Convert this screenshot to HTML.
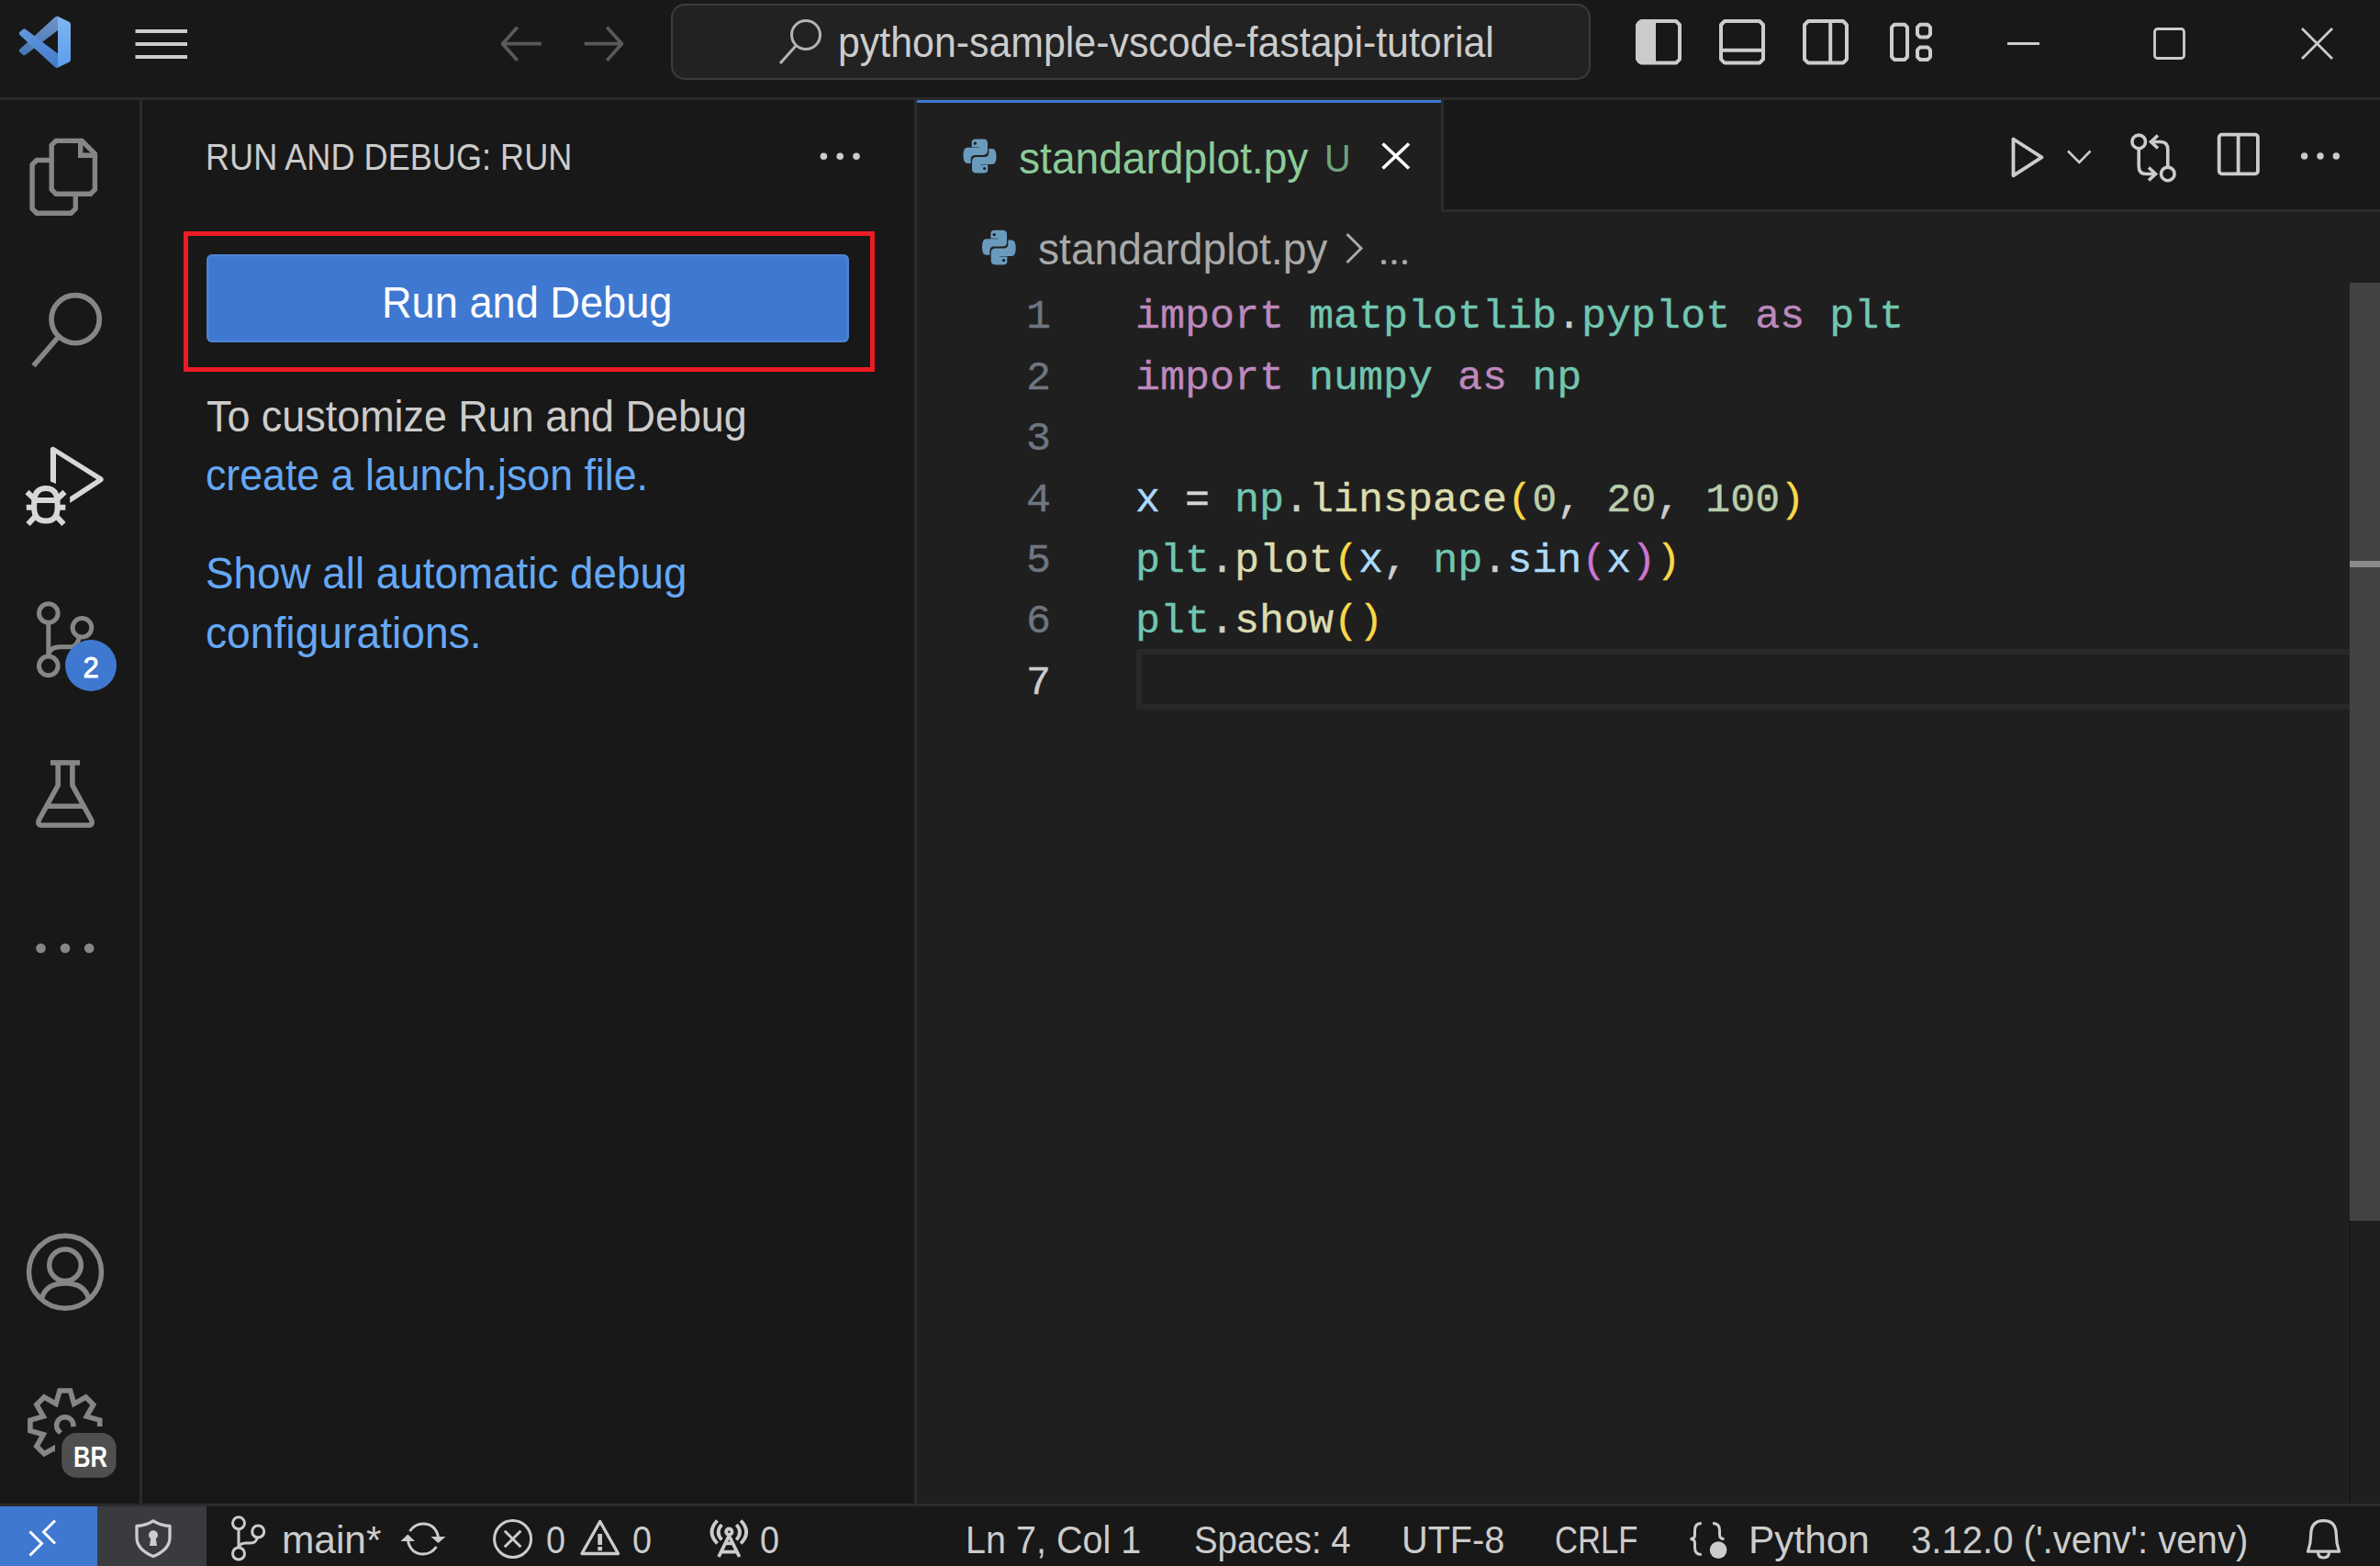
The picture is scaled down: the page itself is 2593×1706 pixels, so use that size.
<!DOCTYPE html>
<html><head><meta charset="utf-8">
<style>
html,body{margin:0;padding:0;}
body{width:2593px;height:1706px;overflow:hidden;background:#181818;position:relative;font-family:"Liberation Sans",sans-serif;}
.r{position:absolute;}
.t{position:absolute;white-space:pre;line-height:1;transform-origin:0 0;font-family:"Liberation Sans",sans-serif;}
.m{position:absolute;white-space:pre;line-height:1;font-family:"Liberation Mono",monospace;-webkit-text-stroke:0.35px currentColor;}
svg.ov{position:absolute;left:0;top:0;}
</style></head><body>
<!-- backgrounds -->
<div class="r" style="left:0;top:0;width:2593px;height:106px;background:#181818"></div>
<div class="r" style="left:0;top:106px;width:2593px;height:3px;background:#2b2b2b"></div>
<div class="r" style="left:152px;top:109px;width:3px;height:1529px;background:#2b2b2b"></div>
<div class="r" style="left:996px;top:109px;width:3px;height:1529px;background:#2b2b2b"></div>
<!-- editor -->
<div class="r" style="left:999px;top:231px;width:1594px;height:1407px;background:#1f1f1f"></div>
<div class="r" style="left:999px;top:228px;width:1594px;height:3px;background:#2b2b2b"></div>
<div class="r" style="left:999px;top:109px;width:571px;height:122px;background:#1f1f1f"></div>
<div class="r" style="left:999px;top:109px;width:571px;height:3px;background:#3f78d0"></div>
<div class="r" style="left:1570px;top:109px;width:3px;height:122px;background:#2b2b2b"></div>
<!-- status bar -->
<div class="r" style="left:0;top:1638px;width:2593px;height:3px;background:#2b2b2b"></div>
<div class="r" style="left:0;top:1641px;width:106px;height:65px;background:#3f78d0"></div>
<div class="r" style="left:106px;top:1641px;width:119px;height:65px;background:#3a3b3f"></div>

<div class="r" style="left:731px;top:4px;width:998px;height:79px;border:2.5px solid #3c3c3c;border-radius:15px;background:#222222"></div>
<!-- TEXT -->
<div class="t" id="title" style="left:913px;top:23px;font-size:46px;color:#cccccc;transform:scaleX(0.932)">python-sample-vscode-fastapi-tutorial</div>

<div class="t" id="sbt" style="left:224px;top:151.4px;font-size:40.6px;color:#cccccc;transform:scaleX(0.89)">RUN AND DEBUG: RUN</div>

<div class="r" style="left:200px;top:252px;width:743px;height:143px;border:5px solid #ec1c24"></div>
<div class="r" style="left:225px;top:277px;width:700px;height:96px;background:#3f78d0;border-radius:6px;box-shadow:inset 0 0 0 2.5px rgba(255,255,255,0.08)"></div>
<div class="t" id="btn" style="left:416px;top:305.8px;font-size:47.8px;color:#ffffff;transform:scaleX(0.945)">Run and Debug</div>

<div class="t" id="p1" style="left:225px;top:430px;font-size:47.8px;color:#cccccc;transform:scaleX(0.939)">To customize Run and Debug</div>
<div class="t" id="p2" style="left:224px;top:493.5px;font-size:47.8px;color:#66a8f5;transform:scaleX(0.935)">create a launch.json file.</div>
<div class="t" id="p3" style="left:224px;top:600.5px;font-size:47.8px;color:#66a8f5;transform:scaleX(0.958)">Show all automatic debug</div>
<div class="t" id="p4" style="left:224px;top:666px;font-size:47.8px;color:#66a8f5;transform:scaleX(0.967)">configurations.</div>

<div class="t" id="tab" style="left:1110px;top:149.2px;font-size:47.8px;color:#8ccb98;transform:scaleX(0.965)">standardplot.py</div>
<div class="t" id="tabu" style="left:1443px;top:150.6px;font-size:43px;color:#6fa37c;transform:scaleX(0.92)">U</div>

<div class="t" id="bc" style="left:1131px;top:247.9px;font-size:47.8px;color:#a9a9a9;transform:scaleX(0.965)">standardplot.py</div>

<!-- status texts -->
<div class="t" id="s_main" style="left:307px;top:1656.5px;font-size:42.5px;color:#cccccc;transform:scaleX(0.998)">main*</div>
<div class="t" id="s_e0" style="left:595px;top:1656.5px;font-size:42.5px;color:#cccccc;transform:scaleX(0.89)">0</div>
<div class="t" id="s_w0" style="left:689px;top:1656.5px;font-size:42.5px;color:#cccccc;transform:scaleX(0.89)">0</div>
<div class="t" id="s_r0" style="left:828px;top:1656.5px;font-size:42.5px;color:#cccccc;transform:scaleX(0.89)">0</div>
<div class="t" id="s_ln" style="left:1052px;top:1656.5px;font-size:42.5px;color:#cccccc;transform:scaleX(0.93)">Ln 7, Col 1</div>
<div class="t" id="s_sp" style="left:1301px;top:1656.5px;font-size:42.5px;color:#cccccc;transform:scaleX(0.903)">Spaces: 4</div>
<div class="t" id="s_utf" style="left:1527px;top:1656.5px;font-size:42.5px;color:#cccccc;transform:scaleX(0.933)">UTF-8</div>
<div class="t" id="s_crlf" style="left:1694px;top:1656.5px;font-size:42.5px;color:#cccccc;transform:scaleX(0.814)">CRLF</div>
<div class="t" id="s_py" style="left:1905px;top:1656.5px;font-size:42.5px;color:#cccccc;transform:scaleX(0.997)">Python</div>
<div class="t" id="s_venv" style="left:2082px;top:1656.5px;font-size:42.5px;color:#cccccc;transform:scaleX(0.943)">3.12.0 ('.venv': venv)</div>

<!-- CODE -->
<div class="r" style="left:1238px;top:707px;width:1340px;height:54px;border:6px solid #282828;border-right:none"></div>
<div class="m" style="left:1079px;width:66px;text-align:right;top:323.3px;font-size:45px;color:#6e7681">1</div>
<div class="m" style="left:1237px;top:323.3px;font-size:45px"><span style="color:#bc89bd">import</span><span style="color:#cccccc"> </span><span style="color:#71c6b1">matplotlib</span><span style="color:#cccccc">.</span><span style="color:#71c6b1">pyplot</span><span style="color:#cccccc"> </span><span style="color:#bc89bd">as</span><span style="color:#cccccc"> </span><span style="color:#71c6b1">plt</span></div>
<div class="m" style="left:1079px;width:66px;text-align:right;top:389.7px;font-size:45px;color:#6e7681">2</div>
<div class="m" style="left:1237px;top:389.7px;font-size:45px"><span style="color:#bc89bd">import</span><span style="color:#cccccc"> </span><span style="color:#71c6b1">numpy</span><span style="color:#cccccc"> </span><span style="color:#bc89bd">as</span><span style="color:#cccccc"> </span><span style="color:#71c6b1">np</span></div>
<div class="m" style="left:1079px;width:66px;text-align:right;top:456.1px;font-size:45px;color:#6e7681">3</div>
<div class="m" style="left:1079px;width:66px;text-align:right;top:522.5px;font-size:45px;color:#6e7681">4</div>
<div class="m" style="left:1237px;top:522.5px;font-size:45px"><span style="color:#aadafa">x</span><span style="color:#cccccc"> </span><span style="color:#d4d4d4">=</span><span style="color:#cccccc"> </span><span style="color:#71c6b1">np</span><span style="color:#cccccc">.</span><span style="color:#dcdcaf">linspace</span><span style="color:#f9d849">(</span><span style="color:#bacdab">0</span><span style="color:#cccccc">,</span><span style="color:#cccccc"> </span><span style="color:#bacdab">20</span><span style="color:#cccccc">,</span><span style="color:#cccccc"> </span><span style="color:#bacdab">100</span><span style="color:#f9d849">)</span></div>
<div class="m" style="left:1079px;width:66px;text-align:right;top:588.9px;font-size:45px;color:#6e7681">5</div>
<div class="m" style="left:1237px;top:588.9px;font-size:45px"><span style="color:#71c6b1">plt</span><span style="color:#cccccc">.</span><span style="color:#dcdcaf">plot</span><span style="color:#f9d849">(</span><span style="color:#aadafa">x</span><span style="color:#cccccc">,</span><span style="color:#cccccc"> </span><span style="color:#71c6b1">np</span><span style="color:#cccccc">.</span><span style="color:#aadafa">sin</span><span style="color:#cc76d1">(</span><span style="color:#aadafa">x</span><span style="color:#cc76d1">)</span><span style="color:#f9d849">)</span></div>
<div class="m" style="left:1079px;width:66px;text-align:right;top:655.3px;font-size:45px;color:#6e7681">6</div>
<div class="m" style="left:1237px;top:655.3px;font-size:45px"><span style="color:#71c6b1">plt</span><span style="color:#cccccc">.</span><span style="color:#dcdcaf">show</span><span style="color:#f9d849">(</span><span style="color:#f9d849">)</span></div>
<div class="m" style="left:1079px;width:66px;text-align:right;top:721.7px;font-size:45px;color:#cccccc">7</div>

<!-- ICONS -->
<!--ICONS-->
<svg class="ov" width="2593" height="1706">
<defs><linearGradient id="lgA" x1="0" y1="0" x2="0" y2="1"><stop offset="0" stop-color="#6f94c4"/><stop offset="1" stop-color="#4576b6"/></linearGradient><linearGradient id="lgB" x1="0" y1="0" x2="1" y2="1"><stop offset="0" stop-color="#6298de"/><stop offset="1" stop-color="#3f78c8"/></linearGradient><linearGradient id="lgC" x1="0" y1="0" x2="0" y2="1"><stop offset="0" stop-color="#80b6f2"/><stop offset="1" stop-color="#5c9de9"/></linearGradient></defs>
<g transform="translate(21,17.8) scale(0.56)"><path fill="url(#lgA)" d="M96.46 10.8L75.86.87a6.23 6.23 0 0 0-7.1 1.2L1.3 63.58a4.17 4.17 0 0 0 0 6.16l5.5 5a4.17 4.17 0 0 0 5.32.24L93.35 13.36c2.73-2.07 6.65-.12 6.65 3.3v-.24a6.25 6.25 0 0 0-3.54-5.62z"/><path fill="url(#lgB)" d="M96.46 89.2l-20.6 9.92a6.23 6.23 0 0 1-7.1-1.2L1.3 36.42a4.17 4.17 0 0 1 0-6.16l5.5-5a4.17 4.17 0 0 1 5.32-.24l81.23 61.62c2.73 2.07 6.65.12 6.65-3.3v.24a6.25 6.25 0 0 1-3.54 5.62z"/><path fill="url(#lgC)" d="M75.86 99.13a6.23 6.23 0 0 1-7.1-1.21c2.3 2.3 6.24.67 6.24-2.59V4.67c0-3.26-3.94-4.9-6.24-2.59a6.23 6.23 0 0 1 7.1-1.21l20.6 9.91A6.25 6.25 0 0 1 100 16.41v67.17a6.25 6.25 0 0 1-3.54 5.63l-20.6 9.92z"/></g>
<rect x="147.5" y="32" width="56.5" height="4" fill="#cccccc"/>
<rect x="147.5" y="46" width="56.5" height="4" fill="#cccccc"/>
<rect x="147.5" y="60" width="56.5" height="4" fill="#cccccc"/>
<g fill="none" stroke="#5a5a5a" stroke-width="3.7" stroke-linejoin="round" stroke-linecap="square"><path d="M588 47.7H548M562.5 31L547.5 47.7L562.5 64.5"/><path d="M638.5 47.7H677M662.5 31L677.5 47.7L662.5 64.5"/></g>
<g fill="none" stroke="#b4b4b4" stroke-width="3"><circle cx="878" cy="38" r="15.5"/><path d="M867 50L850 69"/></g>
<g fill="none" stroke="#cccccc" stroke-width="4" stroke-linejoin="bevel"><path d="M1788 23H1826L1830 27V64.6L1826 68.6H1788L1784 64.6V27Z"/><path d="M1879 23H1917L1921 27V64.6L1917 68.6H1879L1875 64.6V27Z M1875 54.8H1921"/><path d="M1970 23H2008L2012 27V64.6L2008 68.6H1970L1966 64.6V27Z M1994.2 23V68.6"/><path d="M2064 26.7H2075L2078 29.7V62L2075 65H2064L2061 62V29.7Z"/><path d="M2092 26.7H2100L2103 29.7V37.6L2100 40.6H2092L2089 37.6V29.7Z"/><path d="M2092 51.4H2100L2103 54.4V62L2100 65H2092L2089 62V54.4Z"/></g>
<rect x="1784" y="23" width="20" height="45.6" fill="#cccccc"/>
<g fill="none" stroke="#cccccc" stroke-width="2.8"><path d="M2187 47.5H2222"/><rect x="2347.5" y="31.5" width="32" height="32" rx="3"/><path d="M2508 31L2541 64M2541 31L2508 64"/></g>
<g fill="none" stroke="#868686" stroke-width="5.4" stroke-linejoin="miter"><path d="M61 153.4L89.3 153.4L103.4 167.5L103.4 206.5L98.6 211.3L61 211.3L56.2 206.5L56.2 158.2Z"/><path d="M87.7 153.4V169.2H103.4"/><path d="M56.2 174.5H40L35.1 179.3V227.4L40 232.2H77.5L82.3 227.4V211.3"/></g>
<g fill="none" stroke="#868686" stroke-width="5.7"><circle cx="82.15" cy="347.65" r="26.1"/><path d="M64.5 366L36.5 398.5"/></g>
<g fill="none" stroke="#d7d7d7" stroke-width="6" stroke-linejoin="miter"><path d="M50 532Q62.6 532 62.6 548V553Q62.6 567.5 50 567.5Q37.2 567.5 37.2 553V548Q37.2 532 50 532Z"/><path d="M37.5 545H62.5"/><path d="M28.8 552.8H37M63 552.8H71.3"/><path d="M29.5 536L37.5 543.5M70.5 536L62.5 543.5"/><path d="M30.5 571L38.5 562.5M69.5 571L61.5 562.5"/></g>
<path d="M54.9 489.3Q55 486.5 58.5 486.8L111.5 519.8Q114 522.3 111.5 524.8L76.2 548L76.2 541.3L105.3 522.3L61 494.2L61 526.9L54.9 524.4Z" fill="#d7d7d7"/>
<g fill="none" stroke="#868686" stroke-width="5"><circle cx="52.8" cy="668" r="10.3"/><circle cx="89.4" cy="683.7" r="10.3"/><circle cx="52.8" cy="725.4" r="10.3"/><path d="M52.8 678.3V715.1"/><path d="M52.8 715Q52.8 704.7 66 704.7H77Q84 704.7 86.5 693.5"/></g>
<circle cx="99" cy="725" r="28" fill="#3f78d0"/>
<text x="99" y="737.7" text-anchor="middle" font-family="Liberation Sans" font-size="31" stroke="#ffffff" stroke-width="0.9" fill="#ffffff">2</text>
<g fill="none" stroke="#868686" stroke-width="5.6" stroke-linejoin="round"><path d="M55 830.9H87"/><path d="M63.2 833V855.5L42.3 893.5Q40.5 899 46 899H96Q101.5 899 99.7 893.5L78.9 855.5V833"/><path d="M50.5 878.2H91.5"/></g>
<circle cx="44.5" cy="1033" r="5.3" fill="#868686"/>
<circle cx="71" cy="1033" r="5.3" fill="#868686"/>
<circle cx="97.2" cy="1033" r="5.3" fill="#868686"/>
<g fill="none" stroke="#868686" stroke-width="5.5"><circle cx="71" cy="1385.7" r="39.5"/><circle cx="71" cy="1378.3" r="17.3"/><path d="M45.5 1414.5Q50 1398 71 1398Q92 1398 96.5 1414.5"/></g>
<path d="M61.0 1529.3 L65.0 1515.0 L76.6 1515.0 L80.6 1529.3 L93.5 1522.0 L101.7 1530.2 L94.4 1543.1 L108.7 1547.1 L108.7 1558.7 L94.4 1562.7 L101.7 1575.6 L93.5 1583.8 L80.6 1576.5 L76.6 1590.8 L65.0 1590.8 L61.0 1576.5 L48.1 1583.8 L39.9 1575.6 L47.2 1562.7 L32.9 1558.7 L32.9 1547.1 L47.2 1543.1 L39.9 1530.2 L48.1 1522.0Z" fill="none" stroke="#868686" stroke-width="5.6" stroke-linejoin="miter" stroke-miterlimit="10"/>
<circle cx="70.8" cy="1552.9" r="9.2" fill="none" stroke="#868686" stroke-width="5.4"/>
<rect x="60" y="1554" width="74" height="63" rx="22" fill="#181818"/>
<rect x="67.2" y="1561" width="59.4" height="48.8" rx="16" fill="#4f4f4f"/>
<text x="98.5" y="1598" text-anchor="middle" font-family="Liberation Sans" font-weight="bold" font-size="31" textLength="37" lengthAdjust="spacingAndGlyphs" fill="#ffffff">BR</text>
<circle cx="897.4" cy="170.3" r="3.8" fill="#cccccc"/>
<circle cx="915.2" cy="170.3" r="3.8" fill="#cccccc"/>
<circle cx="933" cy="170.3" r="3.8" fill="#cccccc"/>
<g transform="translate(1049.5,151.1) scale(1.0)" fill="#6a9bbd"><path d="M9.2 9.1L9.2 4Q9.2 0.3 13.5 0.3L22 0.3Q26.5 0.3 26.5 4.8L26.5 13Q26.5 17.8 21.5 17.8L13 17.8Q8.2 17.8 8.2 22.5L8.2 26.8L4.5 26.8Q0 26.8 0 18.2Q0 9.6 4.5 9.6L17.4 9.6L17.4 9.1Z"/><path d="M9.2 9.1L9.2 4Q9.2 0.3 13.5 0.3L22 0.3Q26.5 0.3 26.5 4.8L26.5 13Q26.5 17.8 21.5 17.8L13 17.8Q8.2 17.8 8.2 22.5L8.2 26.8L4.5 26.8Q0 26.8 0 18.2Q0 9.6 4.5 9.6L17.4 9.6L17.4 9.1Z" transform="rotate(180 18 18.8)"/><circle cx="12.9" cy="5.1" r="1.6" fill="#1f1f1f"/><circle cx="23.1" cy="32.5" r="1.6" fill="#1f1f1f"/></g>
<g transform="translate(1070,250.4) scale(1.02)" fill="#6a9bbd"><path d="M9.2 9.1L9.2 4Q9.2 0.3 13.5 0.3L22 0.3Q26.5 0.3 26.5 4.8L26.5 13Q26.5 17.8 21.5 17.8L13 17.8Q8.2 17.8 8.2 22.5L8.2 26.8L4.5 26.8Q0 26.8 0 18.2Q0 9.6 4.5 9.6L17.4 9.6L17.4 9.1Z"/><path d="M9.2 9.1L9.2 4Q9.2 0.3 13.5 0.3L22 0.3Q26.5 0.3 26.5 4.8L26.5 13Q26.5 17.8 21.5 17.8L13 17.8Q8.2 17.8 8.2 22.5L8.2 26.8L4.5 26.8Q0 26.8 0 18.2Q0 9.6 4.5 9.6L17.4 9.6L17.4 9.1Z" transform="rotate(180 18 18.8)"/><circle cx="12.9" cy="5.1" r="1.6" fill="#1f1f1f"/><circle cx="23.1" cy="32.5" r="1.6" fill="#1f1f1f"/></g>
<path d="M1506.5 156.5L1535 183.5M1535 156.5L1506.5 183.5" stroke="#ffffff" stroke-width="3.6" fill="none"/>
<path d="M1467.5 255L1483 270.5L1467.5 286" stroke="#a9a9a9" stroke-width="3" fill="none"/>
<circle cx="1507.5" cy="285.5" r="2.6" fill="#a9a9a9"/>
<circle cx="1519" cy="285.5" r="2.6" fill="#a9a9a9"/>
<circle cx="1530.5" cy="285.5" r="2.6" fill="#a9a9a9"/>
<g fill="none" stroke="#cccccc" stroke-width="3.8" stroke-linejoin="round"><path d="M2193.5 151.5L2224.5 171.4L2193.5 191.3Z"/></g>
<path d="M2253 164.5L2265.3 177L2277.5 164.5" fill="none" stroke="#cccccc" stroke-width="2.6"/>
<g fill="none" stroke="#cccccc" stroke-width="3.6"><circle cx="2330.2" cy="154.4" r="7.3"/><circle cx="2361.8" cy="189.4" r="7.3"/><path d="M2330.2 161.7V181Q2330.2 189.5 2338 189.5H2348"/><path d="M2341 182.5L2348.5 189.5L2341 196.5"/><path d="M2361.8 182.1V163Q2361.8 154.5 2354 154.5H2344"/><path d="M2351 147.5L2343.5 154.5L2351 161.5"/></g>
<g fill="none" stroke="#cccccc" stroke-width="3.8"><rect x="2417.7" y="146.6" width="42.2" height="42.7" rx="3"/><path d="M2438.6 146.6V189.3"/></g>
<circle cx="2510.6" cy="170" r="3.7" fill="#cccccc"/>
<circle cx="2528" cy="170" r="3.7" fill="#cccccc"/>
<circle cx="2545.3" cy="170" r="3.7" fill="#cccccc"/>
<rect x="2560" y="308" width="33" height="1022" fill="#434343"/>
<rect x="2560" y="611" width="33" height="7" fill="#8a8a8a"/>
<rect x="2559.5" y="1330" width="1.5" height="308" fill="#151515"/>
<g fill="none" stroke="#ffffff" stroke-width="3"><path d="M32.5 1668.5L45.5 1681.5L32.5 1694.5"/><path d="M60 1656.5L47.5 1669L60 1681.5"/></g>
<path d="M167 1656.8Q174 1661.5 185 1662.5V1675Q185 1688 167 1695.5Q149 1688 149 1675V1662.5Q160 1661.5 167 1656.8Z" fill="none" stroke="#cccccc" stroke-width="3.3" stroke-linejoin="round"/>
<circle cx="167" cy="1672.3" r="5" fill="#cccccc"/><path d="M164.5 1674H169.5L171 1684H163Z" fill="#cccccc"/>
<g fill="none" stroke="#cccccc" stroke-width="3"><circle cx="260" cy="1659.3" r="6.5"/><circle cx="260" cy="1692.5" r="6.5"/><circle cx="281.2" cy="1668.5" r="6.5"/><path d="M260 1665.8V1686"/><path d="M260 1686Q261 1681 268 1681H273Q279 1681 280.5 1675"/></g>
<g fill="none" stroke="#cccccc" stroke-width="3"><path d="M446.5 1668Q452 1660 461 1660Q474 1660 477.5 1674"/><path d="M475.5 1685Q470 1693 461 1693Q448 1693 444.5 1679"/></g>
<path d="M436.5 1679L444.3 1671.5L452 1679Z" fill="#cccccc"/><path d="M469.5 1674L477.5 1681L485.5 1674Z" fill="#cccccc"/>
<g fill="none" stroke="#cccccc" stroke-width="3"><circle cx="558.6" cy="1676.5" r="20"/><path d="M549.8 1667.7L567.4 1685.3M567.4 1667.7L549.8 1685.3"/></g>
<path d="M653.7 1657.5L673.5 1692.5H634Z" fill="none" stroke="#cccccc" stroke-width="3.4" stroke-linejoin="round"/>
<rect x="651.3" y="1671" width="4.7" height="12" fill="#cccccc"/><rect x="651.3" y="1685" width="4.7" height="4.3" fill="#cccccc"/>
<g fill="none" stroke="#cccccc" stroke-width="3.8"><circle cx="794.3" cy="1668.7" r="3.2"/><path d="M794.3 1673L783 1696M794.3 1673L805.6 1696M786 1690.6H802.6M789 1681.3H799.6"/><path d="M786.3 1661Q779 1669 786.3 1677.5M802.3 1661Q809.6 1669 802.3 1677.5"/><path d="M781.5 1656.5Q769.5 1669 781.5 1681.5M807.1 1656.5Q819.1 1669 807.1 1681.5"/></g>
<g fill="none" stroke="#cccccc" stroke-width="3"><path d="M1853.8 1659.5Q1846.5 1659.5 1846.5 1667V1672Q1846.5 1676.5 1841.5 1676.5Q1846.5 1676.5 1846.5 1681V1686Q1846.5 1693.5 1853.8 1693.5"/><path d="M1866 1659.5Q1873.5 1659.5 1873.5 1667V1672Q1873.5 1676.5 1878.5 1676.5"/></g>
<circle cx="1872.1" cy="1688.6" r="9.3" fill="#cccccc"/>
<path d="M2531.5 1656.6Q2545.3 1656.6 2545.3 1672Q2545.3 1681 2548.5 1690.2H2514.5Q2517.7 1681 2517.7 1672Q2517.7 1656.6 2531.5 1656.6Z" fill="none" stroke="#cccccc" stroke-width="3.2" stroke-linejoin="round"/>
<path d="M2525.5 1691Q2525.5 1697 2531.5 1697Q2537.5 1697 2537.5 1691" fill="none" stroke="#cccccc" stroke-width="3.2"/>
</svg>
<!--/ICONS-->
</body></html>
